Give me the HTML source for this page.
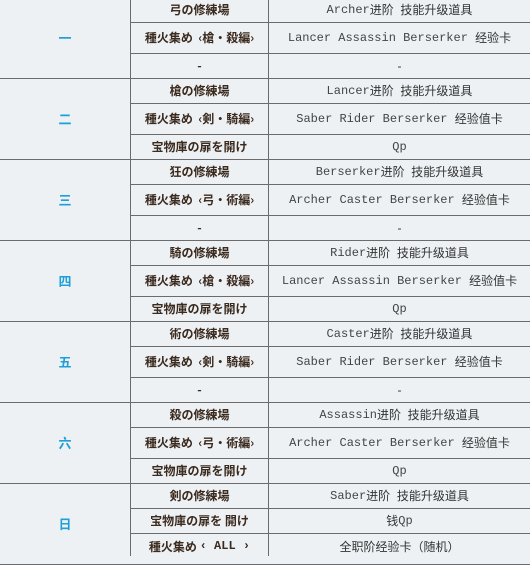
<!DOCTYPE html>
<html><head><meta charset="utf-8"><style>
body{margin:0;width:530px;height:556px;overflow:hidden;background:#edf1f4;position:relative;font-family:"Liberation Sans","Noto Sans CJK SC",sans-serif;}
.h{position:absolute;height:1px;background:#6b6b6b;right:0}
.v{position:absolute;width:1px;background:#6b6b6b;top:0;height:556px}
.c{position:absolute;display:flex;align-items:center;justify-content:center;white-space:pre;font-size:12px}
.g{left:0;width:130px;color:#1e9fd8;font-weight:bold;font-size:13px;font-family:"Noto Sans CJK SC",sans-serif}
.m{left:131px;width:137px;color:#3b2a1e;font-weight:bold;font-family:"Noto Sans CJK JP",sans-serif}
.r{left:269px;width:261px;color:#333}
.r span,.m span{font-family:"Liberation Mono","DejaVu Sans Mono",monospace;color:#444;font-weight:normal}
.m span{font-weight:bold;color:#3b2a1e}
</style></head><body>
<div class="v" style="left:130px"></div>
<div class="v" style="left:268px"></div>
<div id="c"></div>
<script>
var g=[["一",[["弓の修練場","<span>Archer</span>进阶  技能升级道具"],["種火集め  ‹槍・殺編›","<span>Lancer Assassin Berserker </span>经验卡"],["-","-"]]],
["二",[["槍の修練場","<span>Lancer</span>进阶  技能升级道具"],["種火集め  ‹剣・騎編›","<span>Saber Rider Berserker </span>经验值卡"],["宝物庫の扉を開け","<span>Qp</span>"]]],
["三",[["狂の修練場","<span>Berserker</span>进阶  技能升级道具"],["種火集め  ‹弓・術編›","<span>Archer Caster Berserker </span>经验值卡"],["-","-"]]],
["四",[["騎の修練場","<span>Rider</span>进阶  技能升级道具"],["種火集め  ‹槍・殺編›","<span>Lancer Assassin Berserker </span>经验值卡"],["宝物庫の扉を開け","<span>Qp</span>"]]],
["五",[["術の修練場","<span>Caster</span>进阶  技能升级道具"],["種火集め  ‹剣・騎編›","<span>Saber Rider Berserker </span>经验值卡"],["-","-"]]],
["六",[["殺の修練場","<span>Assassin</span>进阶  技能升级道具"],["種火集め  ‹弓・術編›","<span>Archer Caster Berserker </span>经验值卡"],["宝物庫の扉を開け","<span>Qp</span>"]]],
["日",[["剣の修練場","<span>Saber</span>进阶  技能升级道具"],["宝物庫の扉を 開け","钱<span>Qp</span>"],["種火集め <span>‹ ALL ›</span>","全职阶经验卡（随机）"]]]];
var h="",ty=-3;
g.forEach(function(x,i){
 var hs=i==6?[25,25,26]:[25,31,25];
 h+='<div class="c g" style="top:'+ty+'px;height:81px">'+x[0]+'</div>';
 var y=ty;
 x[1].forEach(function(r,j){
  h+='<div class="c m" style="top:'+y+'px;height:'+hs[j]+'px">'+r[0]+'</div>';
  h+='<div class="c r" style="top:'+y+'px;height:'+hs[j]+'px">'+r[1]+'</div>';
  y+=hs[j];
  if(j<2)h+='<div class="h" style="left:130px;top:'+y+'px"></div>';
 });
 ty+=81;
 h+='<div class="h" style="left:0;top:'+ty+'px"></div>';
});
document.getElementById("c").innerHTML=h;
</script>
</body></html>
